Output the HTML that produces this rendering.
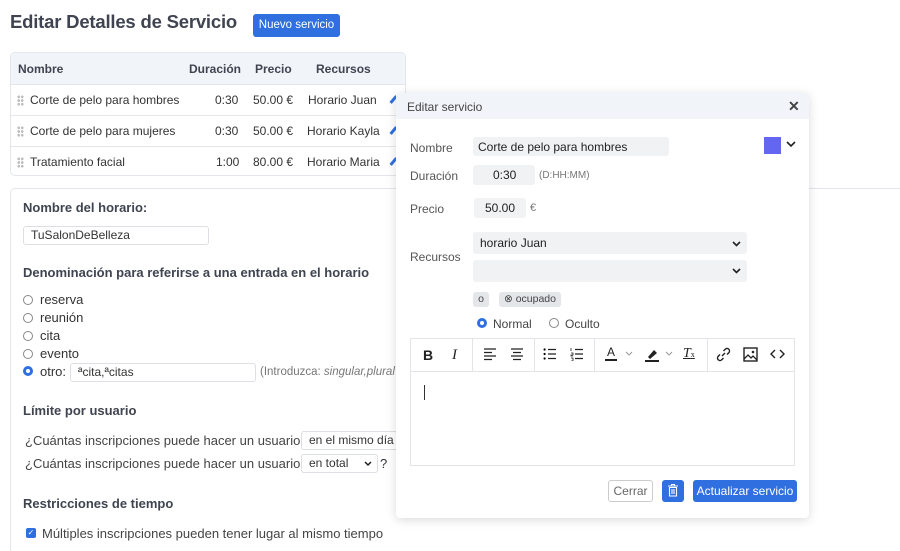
<!DOCTYPE html>
<html style="height:551px;overflow:hidden"><head><meta charset="utf-8">
<style>
*{box-sizing:border-box;margin:0;padding:0}
html,body{width:900px;height:551px;overflow:hidden}
body{background:#fff;font-family:"Liberation Sans",Arial,sans-serif;color:#333;position:relative;font-size:13px}
.a{position:absolute;white-space:nowrap}
h1{position:absolute;left:10px;top:11px;font-size:18.5px;font-weight:bold;color:#3f4450;letter-spacing:-0.2px}
.btnb{background:#2f6fe0;color:#fff;border-radius:3px}
.tbl{position:absolute;left:10px;top:52px;width:396px;height:124px;border:1px solid #e3e7ec;border-radius:5px;overflow:hidden}
.th{position:absolute;left:0;top:0;width:100%;height:32px;background:#f1f4f8;border-bottom:1px solid #e3e7ec}
.row{position:absolute;left:0;width:100%;height:31px;border-bottom:1px solid #e5e7ea}
.grip{position:absolute;left:6px;top:10px;width:7px;height:11px;background:radial-gradient(circle,#bbb 1.2px,transparent 1.5px) 0 0/3.5px 3.7px}
.pen{position:absolute;left:378px;width:9px;height:3px;background:#2f6fe0;transform:rotate(-50deg)}
.panel{position:absolute;left:10px;top:188px;width:900px;height:363px;border:1px solid #e3e7ec;border-bottom:none;border-right:none;border-radius:5px 0 0 0}
.lbl{font-weight:bold;color:#3f4450;font-size:13px}
.rad{position:absolute;width:10px;height:10px;border:1px solid #888;border-radius:50%}
.inp{position:absolute;border:1px solid #dcdfe3;border-radius:3px;background:#fff;font-size:12px;padding-left:7px}
.modal{position:absolute;left:396px;top:93px;width:413px;height:425px;background:#fff;border-radius:4px;box-shadow:0 2px 10px rgba(0,0,0,.15)}
.mh{position:absolute;left:0;top:0;width:100%;height:26px;background:#f1f4f8;border-radius:4px 4px 0 0}
.fld{position:absolute;background:#f1f2f4;border-radius:3px}
.tb{position:absolute;left:14px;top:245px;width:385px;height:128px;border:1px solid #e2e4e7}
.sep{position:absolute;top:0;width:1px;height:32px;background:#e2e4e7}
.ic{position:absolute;top:8px}
</style></head><body>
<h1>Editar Detalles de Servicio</h1>
<div class="a btnb" style="left:253px;top:14px;width:87px;height:23px;font-size:11.5px;line-height:23px;text-align:center">Nuevo servicio</div>

<div class="tbl">
 <div class="th"></div>
 <div class="a" style="left:7px;top:9px;font-weight:bold;font-size:12px;color:#3f4450">Nombre</div>
 <div class="a" style="left:178px;top:9px;font-weight:bold;font-size:12px;color:#3f4450">Duración</div>
 <div class="a" style="left:244px;top:9px;font-weight:bold;font-size:12px;color:#3f4450">Precio</div>
 <div class="a" style="left:305px;top:9px;font-weight:bold;font-size:12px;color:#3f4450">Recursos</div>
 <div class="row" style="top:32px"><div class="grip"></div><div class="a" style="left:19px;top:8px;font-size:12px">Corte de pelo para hombres</div><div class="a" style="left:204px;top:8px;font-size:12px">0:30</div><div class="a" style="left:242px;top:8px;font-size:12px">50.00 €</div><div class="a" style="left:297px;top:8px;font-size:12px">Horario Juan</div><div class="pen" style="top:13px"></div></div>
 <div class="row" style="top:63px"><div class="grip"></div><div class="a" style="left:19px;top:8px;font-size:12px">Corte de pelo para mujeres</div><div class="a" style="left:204px;top:8px;font-size:12px">0:30</div><div class="a" style="left:242px;top:8px;font-size:12px">50.00 €</div><div class="a" style="left:296px;top:8px;font-size:12px">Horario Kayla</div><div class="pen" style="top:13px"></div></div>
 <div class="row" style="top:94px"><div class="grip"></div><div class="a" style="left:19px;top:8px;font-size:12px">Tratamiento facial</div><div class="a" style="left:205px;top:8px;font-size:12px">1:00</div><div class="a" style="left:242px;top:8px;font-size:12px">80.00 €</div><div class="a" style="left:296px;top:8px;font-size:12px">Horario Maria</div><div class="pen" style="top:13px"></div></div>
</div>

<div class="panel"></div>
<div class="a lbl" style="left:23px;top:200px">Nombre del horario:</div>
<div class="inp" style="left:23px;top:226px;width:186px;height:19px;line-height:17px">TuSalonDeBelleza</div>
<div class="a lbl" style="left:23px;top:265px">Denominación para referirse a una entrada en el horario</div>
<div class="rad" style="left:23px;top:295px"></div><div class="a" style="left:40px;top:292px">reserva</div>
<div class="rad" style="left:23px;top:313px"></div><div class="a" style="left:40px;top:310px">reunión</div>
<div class="rad" style="left:23px;top:331px"></div><div class="a" style="left:40px;top:328px">cita</div>
<div class="rad" style="left:23px;top:349px"></div><div class="a" style="left:40px;top:346px">evento</div>
<div class="rad" style="left:23px;top:366px;border:3px solid #2f6fe0"></div><div class="a" style="left:40px;top:364px">otro:</div>
<div class="inp" style="left:70px;top:363px;width:186px;height:19px;line-height:17px">ªcita,ªcitas</div>
<div class="a" style="left:260px;top:366px;font-size:11.5px;color:#777">(Introduzca: <i>singular,plural</i></div>
<div class="a lbl" style="left:23px;top:403px">Límite por usuario</div>
<div class="a" style="left:25px;top:433px;color:#444">¿Cuántas inscripciones puede hacer un usuario</div>
<div class="inp" style="left:301px;top:431px;width:100px;height:19px;line-height:17px">en el mismo día</div>
<div class="a" style="left:25px;top:456px;color:#444">¿Cuántas inscripciones puede hacer un usuario</div>
<div class="inp" style="left:301px;top:454px;width:77px;height:19px;line-height:17px">en total<svg style="position:absolute;right:5px;top:6px" width="8" height="6"><path d="M1 1l3 3 3-3" stroke="#222" stroke-width="1.5" fill="none"/></svg></div>
<div class="a" style="left:380px;top:456px">?</div>
<div class="a lbl" style="left:23px;top:496px">Restricciones de tiempo</div>
<div class="a" style="left:26px;top:528px;width:10px;height:10px;background:#2f6fe0;border-radius:2px;color:#fff;font-size:8px;line-height:10px;text-align:center">✓</div>
<div class="a" style="left:42px;top:526px;color:#444">Múltiples inscripciones pueden tener lugar al mismo tiempo</div>

<div class="modal">
 <div class="mh"></div>
 <div class="a" style="left:11px;top:7px;font-size:12px;color:#444">Editar servicio</div>
 <div class="a" style="left:392px;top:5px;font-size:14px;font-weight:bold;color:#444">✕</div>
 <div class="a" style="left:14px;top:48px;font-size:12px;color:#555">Nombre</div>
 <div class="fld" style="left:77px;top:44px;width:196px;height:19px"></div>
 <div class="a" style="left:82px;top:47px;font-size:12px;color:#222">Corte de pelo para hombres</div>
 <div class="a" style="left:368px;top:44px;width:17px;height:17px;background:#6366f1"></div>
 <svg class="a" style="left:390px;top:48px" width="10" height="7"><path d="M1 1l4 4 4-4" stroke="#222" stroke-width="1.6" fill="none"/></svg>
 <div class="a" style="left:14px;top:76px;font-size:12px;color:#555">Duración</div>
 <div class="fld" style="left:77px;top:72px;width:62px;height:20px"></div>
 <div class="a" style="left:97px;top:75px;font-size:12px;color:#222">0:30</div>
 <div class="a" style="left:143px;top:77px;font-size:10px;color:#777">(D:HH:MM)</div>
 <div class="a" style="left:14px;top:109px;font-size:12px;color:#555">Precio</div>
 <div class="fld" style="left:78px;top:105px;width:52px;height:20px"></div>
 <div class="a" style="left:89px;top:108px;font-size:12px;color:#222">50.00</div>
 <div class="a" style="left:134px;top:109px;font-size:11px;color:#777">€</div>
 <div class="a" style="left:14px;top:157px;font-size:12px;color:#555">Recursos</div>
 <div class="fld" style="left:77px;top:139px;width:274px;height:22px"></div>
 <div class="a" style="left:84px;top:143px;font-size:12px;color:#222">horario Juan</div>
 <svg class="a" style="left:336px;top:148px" width="9" height="6"><path d="M1 1l3.5 3.5L8 1" stroke="#222" stroke-width="1.6" fill="none"/></svg>
 <div class="fld" style="left:77px;top:167px;width:274px;height:22px"></div>
 <svg class="a" style="left:336px;top:175px" width="9" height="6"><path d="M1 1l3.5 3.5L8 1" stroke="#222" stroke-width="1.6" fill="none"/></svg>
 <div class="a" style="left:77px;top:199px;width:16px;height:15px;background:#e4e6e9;border-radius:3px;font-size:10.5px;text-align:center;line-height:15px;color:#444">o</div>
 <div class="a" style="left:103px;top:199px;width:62px;height:15px;background:#e4e6e9;border-radius:3px;font-size:10.5px;text-align:center;line-height:15px;color:#444">⊗ ocupado</div>
 <div class="rad" style="left:81px;top:225px;border:3px solid #2f6fe0"></div>
 <div class="a" style="left:97px;top:224px;font-size:12px;color:#444">Normal</div>
 <div class="rad" style="left:153px;top:225px"></div>
 <div class="a" style="left:169px;top:224px;font-size:12px;color:#444">Oculto</div>

 <div class="tb">
  <div style="position:absolute;left:0;top:32px;width:100%;height:1px;background:#e2e4e7"></div>
  <div class="sep" style="left:61px"></div><div class="sep" style="left:123px"></div><div class="sep" style="left:183px"></div><div class="sep" style="left:296px"></div>
  <div class="a" style="left:12px;top:8px;font-weight:bold;font-size:14px;color:#222">B</div>
  <div class="a" style="left:41px;top:8px;font-style:italic;font-family:'Liberation Serif';font-size:15px;color:#222">I</div>
  <svg class="ic" style="left:72px" width="14" height="14"><path d="M1 2h12M1 5.5h8M1 9h12M1 12.5h8" stroke="#222" stroke-width="1.3"/></svg>
  <svg class="ic" style="left:99px" width="14" height="14"><path d="M1 2h12M3 5.5h8M1 9h12M3 12.5h8" stroke="#222" stroke-width="1.3"/></svg>
  <svg class="ic" style="left:132px" width="14" height="14"><path d="M5 2.5h8M5 7h8M5 11.5h8" stroke="#222" stroke-width="1.3"/><circle cx="1.6" cy="2.5" r="1.1"/><circle cx="1.6" cy="7" r="1.1"/><circle cx="1.6" cy="11.5" r="1.1"/></svg>
  <svg class="ic" style="left:159px" width="14" height="14"><path d="M5 2.5h8M5 7h8M5 11.5h8" stroke="#222" stroke-width="1.3"/><path d="M1 1v3M1 6h2v2H1v1h2M1 11h2v3H1" stroke="#222" stroke-width=".8" fill="none"/></svg>
  <div class="a" style="left:194px;top:7px;font-size:12px;color:#222;border-bottom:2px solid #222;line-height:13px;padding:0 2px">A</div>
  <svg class="ic" style="left:214px;top:12px" width="8" height="5"><path d="M1 1l3 3 3-3" stroke="#999" fill="none"/></svg>
  <svg class="ic" style="left:233px" width="16" height="16"><path d="M4 10l6-7 3 3-7 6z" fill="#222"/><path d="M1 14h14" stroke="#222" stroke-width="2"/></svg>
  <svg class="ic" style="left:254px;top:12px" width="8" height="5"><path d="M1 1l3 3 3-3" stroke="#999" fill="none"/></svg>
  <div class="a" style="left:272px;top:7px;font-style:italic;font-family:'Liberation Serif';font-size:14px;color:#222;text-decoration:underline">T<span style="font-size:8px;font-style:normal">x</span></div>
  <svg class="ic" style="left:305px" width="15" height="15"><path d="M6 9l3-3M7.5 4l2-2a2.5 2.5 0 013.5 3.5l-2 2M7.5 11l-2 2a2.5 2.5 0 01-3.5-3.5l2-2" stroke="#222" stroke-width="1.4" fill="none"/></svg>
  <svg class="ic" style="left:332px" width="15" height="15"><rect x="1" y="1" width="13" height="13" stroke="#222" stroke-width="1.4" fill="none"/><path d="M1 12l4-4 3 3 2-2 4 4" stroke="#222" stroke-width="1.3" fill="none"/><circle cx="10" cy="5" r="1.3" fill="#222"/></svg>
  <svg class="ic" style="left:359px;top:10px" width="15" height="10"><path d="M5 1L1 5l4 4M10 1l4 4-4 4" stroke="#222" stroke-width="1.4" fill="none"/></svg>
  <div class="a" style="left:13px;top:46px;width:1px;height:15px;background:#333"></div>
 </div>
 <div class="a" style="left:212px;top:387px;width:45px;height:22px;border:1px solid #ccc;border-radius:3px;font-size:12px;color:#666;text-align:center;line-height:20px">Cerrar</div>
 <div class="a btnb" style="left:266px;top:387px;width:22px;height:22px"><svg style="position:absolute;left:6px;top:4px" width="10" height="13"><path d="M0 2h10M3.5 2V.5h3V2M1.5 3.5h7V12h-7zM4 5v5M6 5v5" stroke="#fff" stroke-width="1.1" fill="none"/></svg></div>
 <div class="a btnb" style="left:297px;top:387px;width:104px;height:22px;font-size:12px;line-height:22px;text-align:center">Actualizar servicio</div>
</div>
</body></html>
